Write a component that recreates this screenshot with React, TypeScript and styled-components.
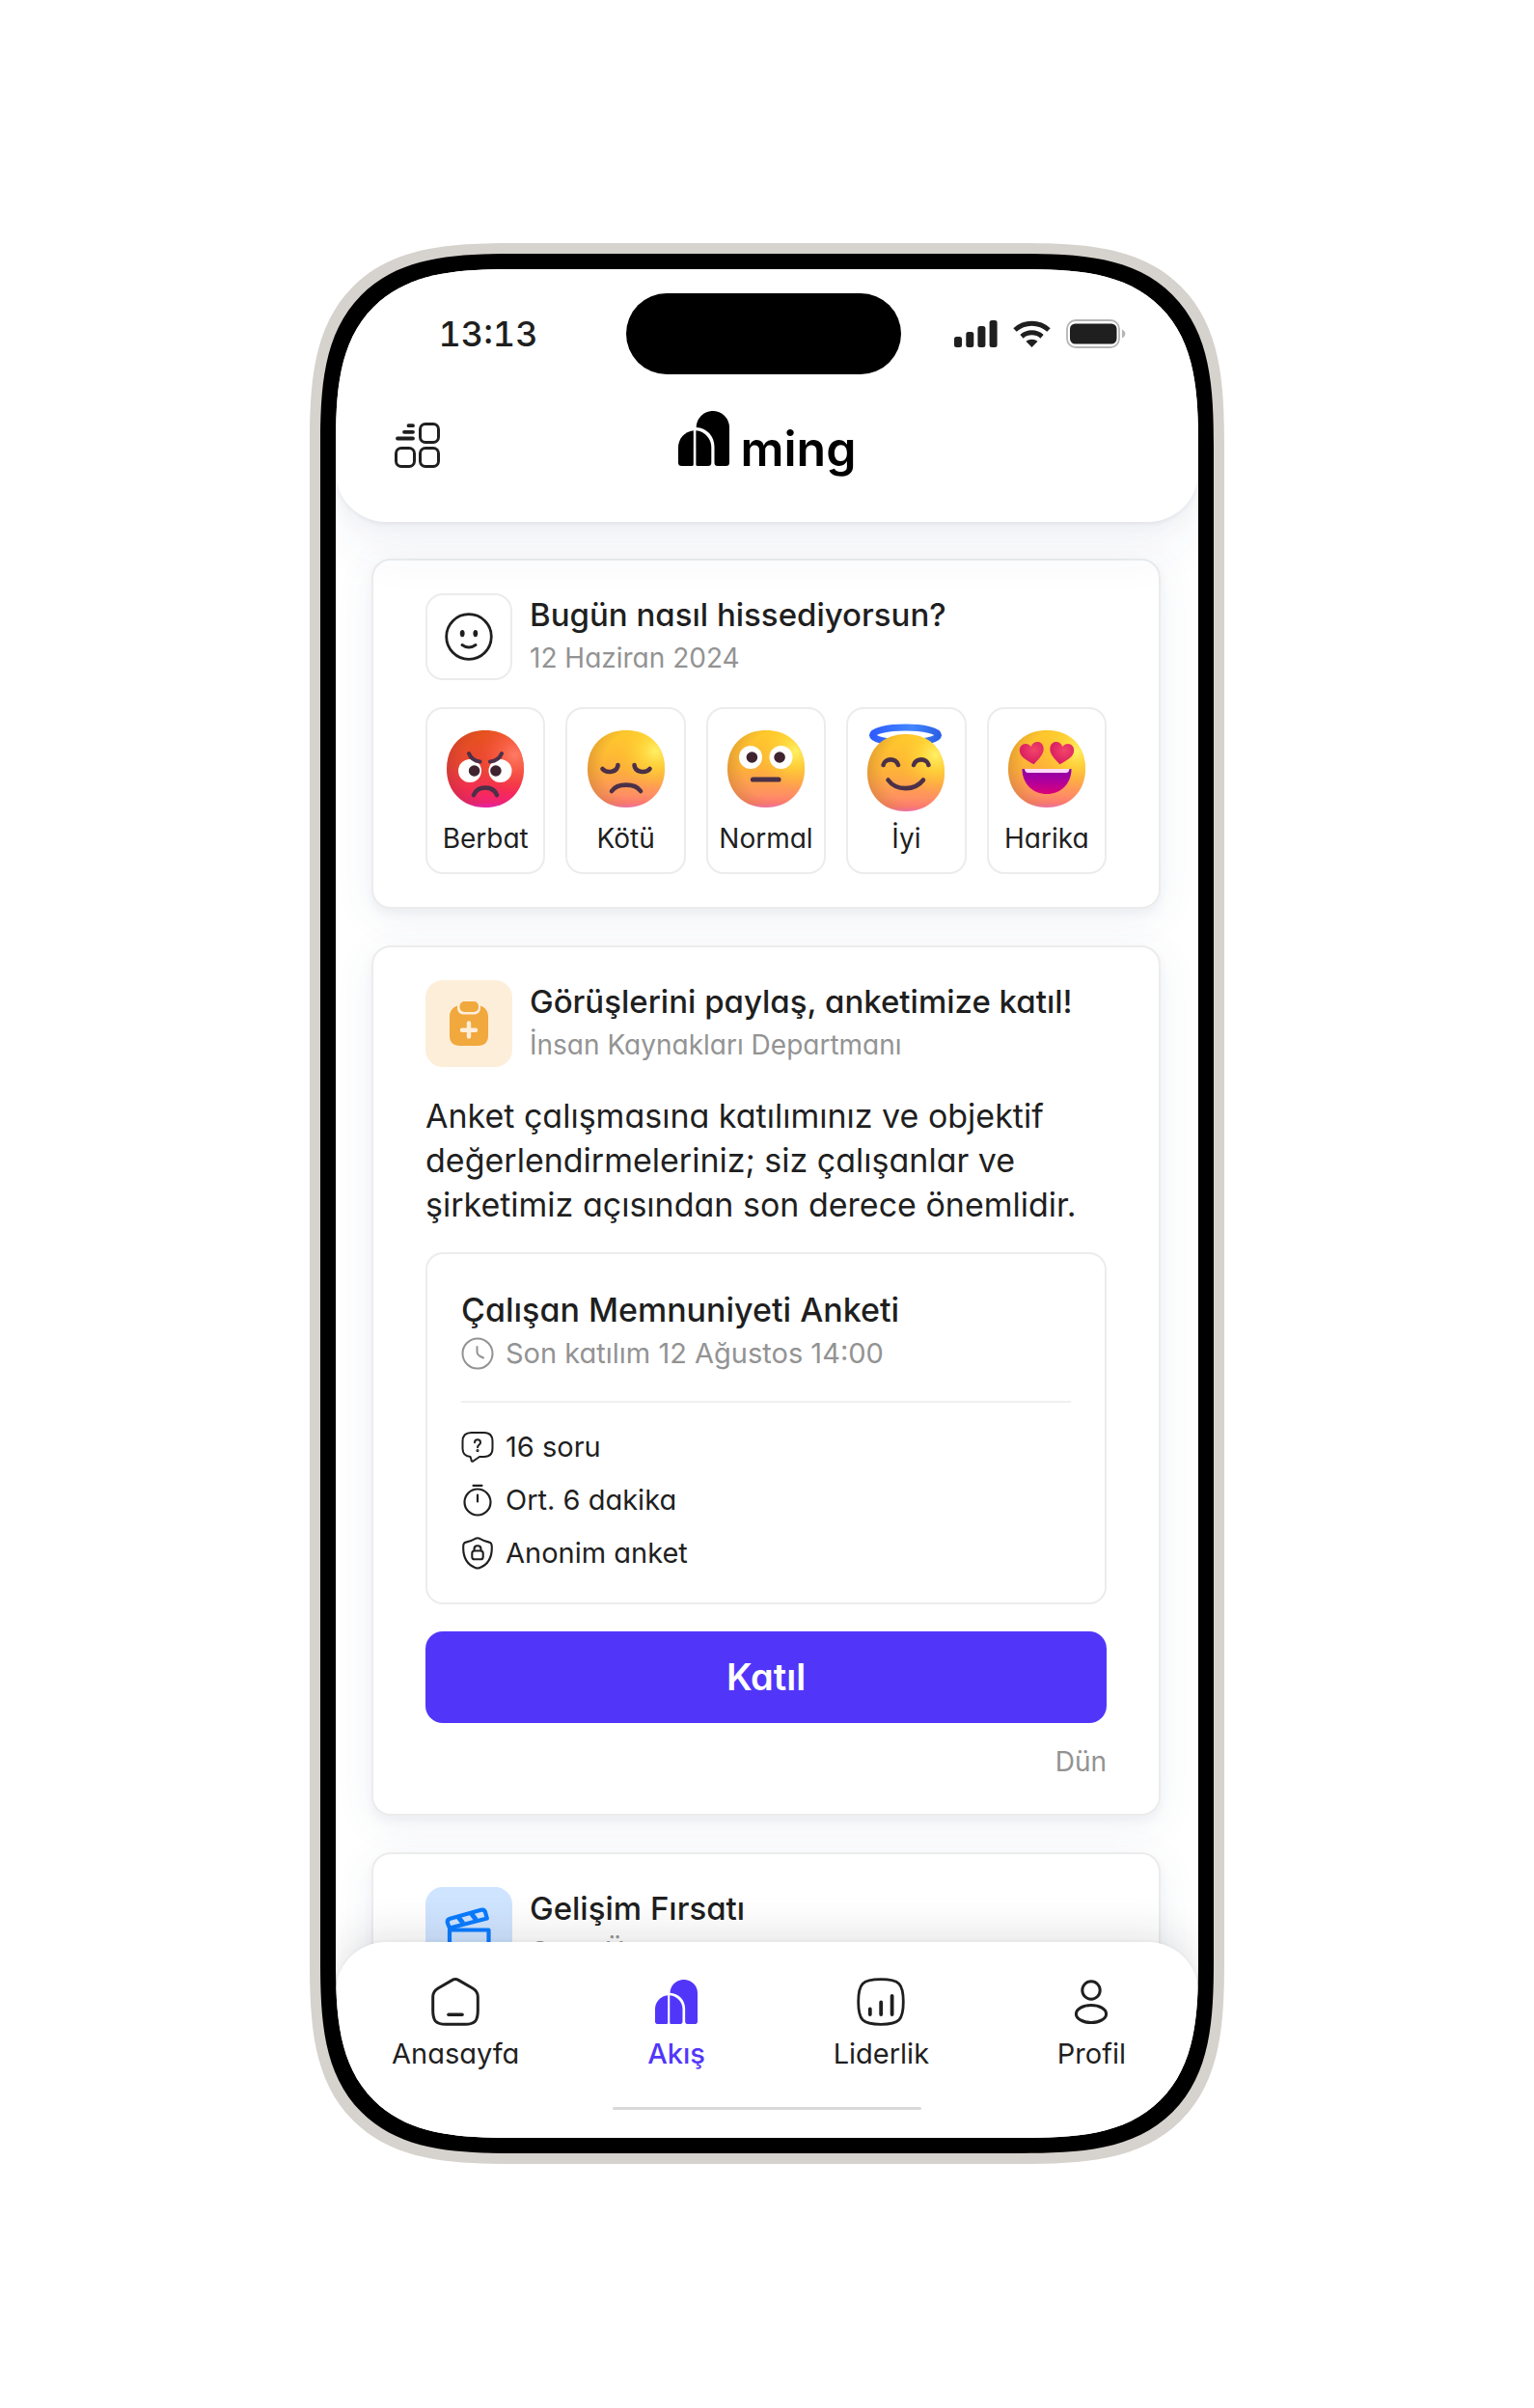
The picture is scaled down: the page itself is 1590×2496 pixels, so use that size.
import React from "react";
import styled, { createGlobalStyle, css } from "styled-components";

const ink = "#1f1f1f";
const muted = "#939393";
const line = "#ececec";
const brand = "#5136fa";

const GlobalStyle = createGlobalStyle`
  *, *::before, *::after { box-sizing: border-box; }
  body {
    margin: 0;
    background: #fff;
    color: ${ink};
    font-family: "Inter", "Noto Sans", sans-serif;
    font-feature-settings: "cv11";
  }
  h1, h2, h3, p, ul { margin: 0; padding: 0; }
  button { font: inherit; color: inherit; cursor: pointer; font-feature-settings: inherit; }
`;

/* ---------- device ---------- */

const Page = styled.div`
  display: flex;
  justify-content: center;
  padding: 252px 24px;
`;

const smoothCorner = (smooth: number, plain: number) => css`
  border-radius: ${plain}px;
  @supports (corner-shape: superellipse(1.5)) {
    border-radius: ${smooth}px;
    corner-shape: superellipse(1.54);
  }
`;

const Rim = styled.div`
  width: 100%;
  max-width: 948px;
  padding: 11px;
  background: #d6d2cd;
  ${smoothCorner(212, 154)}
`;

const Bezel = styled.div`
  padding: 16px;
  background: #000;
  ${smoothCorner(201, 143)}
`;

const Screen = styled.div`
  display: flex;
  flex-direction: column;
  overflow: hidden;
  background: #fff;
  ${smoothCorner(185, 127)}
`;

/* ---------- header ---------- */

const Header = styled.header`
  position: relative;
  z-index: 2;
  padding-top: 25px;
  background: #fff;
  border-radius: 0 0 52px 52px;
  box-shadow: 0 2px 4px rgba(40, 40, 50, 0.06), 0 8px 20px rgba(50, 80, 120, 0.05),
    0 36px 50px rgba(50, 80, 130, 0.045);
`;

const StatusBar = styled.div`
  display: grid;
  grid-template-columns: 1fr 285px 1fr;
  align-items: center;
  padding-right: 8px;
`;

const Clock = styled.time`
  justify-self: end;
  padding-right: 91px;
  font-size: 36px;
  font-weight: 500;
  font-variant-numeric: tabular-nums;
  line-height: 44px;
`;

const Island = styled.div`
  height: 84px;
  border-radius: 42px;
  background: #000;
`;

const StatusIcons = styled.div`
  display: flex;
  align-items: center;
  gap: 16px;
  padding-left: 55px;
`;

const BrandRow = styled.div`
  display: grid;
  grid-template-columns: 1fr auto 1fr;
  align-items: end;
  padding: 38px 61px 56px;
`;

const IconButton = styled.button`
  display: flex;
  justify-self: start;
  padding: 0;
  border: 0;
  background: none;
`;

const Logo = styled.h1`
  display: flex;
  align-items: baseline;
  gap: 12px;
  color: #000;
  font-size: 50px;
  font-weight: 600;
  line-height: 40px;
`;

/* ---------- feed ---------- */

const Feed = styled.main`
  display: flex;
  flex-direction: column;
  gap: 38px;
  padding: 38px 39px 0 37px;
`;

const Card = styled.article`
  padding: 34px 54px;
  border: 2px solid ${line};
  border-radius: 20px;
  background: #fff;
  box-shadow: 0 6px 10px rgba(50, 70, 110, 0.05), 0 8px 40px rgba(60, 90, 140, 0.08);
`;

const CardHead = styled.div`
  display: flex;
  gap: 18px;
`;

const Tile = styled.div<{ $bg?: string }>`
  display: grid;
  place-items: center;
  flex: none;
  width: 90px;
  height: 90px;
  border: 2px solid ${(p) => p.$bg ?? line};
  border-radius: 18px;
  background: ${(p) => p.$bg ?? "transparent"};
`;

const Title = styled.h2`
  font-size: 33px;
  font-weight: 500;
  line-height: 45px;
`;

const SurveyTitle = styled.h3`
  font-size: 34px;
  font-weight: 500;
  line-height: 45px;
`;

const Sub = styled.p`
  color: ${muted};
  font-size: 28px;
  line-height: 45px;
`;

const Moods = styled.div`
  display: grid;
  grid-template-columns: repeat(5, 1fr);
  gap: 21px;
  margin-top: 28px;
`;

const Mood = styled.button`
  display: flex;
  flex-direction: column;
  align-items: center;
  gap: 14px;
  padding: 22px 0 17px;
  border: 2px solid ${line};
  border-radius: 18px;
  background: #fff;
  font-size: 28px;
  line-height: 36px;

  svg { overflow: visible; }
`;

const Body = styled.p`
  margin-top: 28px;
  font-size: 34px;
  line-height: 46px;
`;

const Survey = styled.section`
  margin-top: 26px;
  padding: 35px 35px 24px;
  border: 2px solid ${line};
  border-radius: 18px;
`;

const Deadline = styled.p`
  display: flex;
  align-items: center;
  gap: 12px;
  color: ${muted};
  font-size: 29px;
  line-height: 45px;
`;

const Facts = styled.ul`
  margin-top: 27px;
  padding-top: 18px;
  border-top: 2px solid #f0f0f0;
  list-style: none;
`;

const Fact = styled.li`
  display: flex;
  align-items: center;
  gap: 12px;
  font-size: 29px;
  line-height: 55px;
`;

const Primary = styled.button`
  display: block;
  width: 100%;
  margin-top: 28px;
  padding: 0;
  border: 0;
  border-radius: 18px;
  background: ${brand};
  && { color: #fff; font-size: 38px; font-weight: 600; line-height: 95px; }
`;

const When = styled.p`
  margin-top: 20px;
  color: ${muted};
  font-size: 28px;
  line-height: 40px;
  text-align: right;
`;

/* ---------- tab bar ---------- */

const TabBar = styled.nav`
  position: relative;
  z-index: 2;
  margin-top: -69px;
  padding: 37px 0 29px;
  background: #fff;
  border-radius: 52px 52px 0 0;
  box-shadow: 0 -2px 3px rgba(0, 0, 0, 0.03), 0 -8px 44px rgba(30, 34, 44, 0.12);
`;

const Tabs = styled.div`
  display: flex;
  justify-content: space-between;
  padding: 0 75px 0 58px;
`;

const Tab = styled.a<{ $active?: boolean }>`
  display: flex;
  flex-direction: column;
  align-items: center;
  gap: 10px;
  color: ${(p) => (p.$active ? brand : ink)};
  font-size: 29px;
  font-weight: ${(p) => (p.$active ? 500 : 400)};
  line-height: 38px;
  text-decoration: none;
`;

const HomeIndicator = styled.div`
  width: 320px;
  height: 3px;
  margin: 36px auto 0;
  border-radius: 3px;
  background: #d9d9d9;
`;

/* ---------- icons ---------- */

const Signal = () => (
  <svg width="45" height="28" viewBox="0 0 45 28" fill={ink} aria-hidden>
    <rect x="0" y="17" width="8" height="11" rx="2.5" />
    <rect x="12.3" y="12" width="8" height="16" rx="2.5" />
    <rect x="24.4" y="6" width="8" height="22" rx="2.5" />
    <rect x="36.6" y="0" width="8" height="28" rx="2.5" />
  </svg>
);

const Wifi = () => (
  <svg width="39" height="28" viewBox="0 0 39 28" aria-hidden>
    <g fill="none" stroke={ink} strokeWidth="5">
      <path d="M2 10 A26 26 0 0 1 37 10" />
      <path d="M9 16.8 A16 16 0 0 1 30 16.8" />
    </g>
    <path d="M13.4 21.8 A10 10 0 0 1 25.6 21.8 L19.5 28 Z" fill={ink} />
  </svg>
);

const Battery = () => (
  <svg width="62" height="30" viewBox="0 0 62 30" aria-hidden>
    <rect x="1" y="1" width="54" height="28" rx="9" fill="none" stroke="#b5b5b5" strokeWidth="1.8" />
    <rect x="4" y="4.5" width="48.5" height="21" rx="5.5" fill={ink} />
    <path d="M58 10.5 c4.5 2 4.5 7 0 9 z" fill="#b5b5b5" />
  </svg>
);

const MenuIcon = () => (
  <svg width="47" height="47" viewBox="0 0 47 47" fill="none" stroke={ink} strokeWidth="3" aria-hidden>
    <rect x="26.5" y="1.5" width="19" height="19" rx="5.5" />
    <rect x="1.5" y="26.5" width="19" height="19" rx="5.5" />
    <rect x="26.5" y="26.5" width="19" height="19" rx="5.5" />
    <path d="M14.5 3.2 H19 M10 9.8 H19 M3 16.5 H19" strokeWidth="3.8" strokeLinecap="round" />
  </svg>
);

const Mark = ({ width, height }: { width: number; height: number }) => (
  <svg width={width} height={height} viewBox="0 0 53 57" preserveAspectRatio="none" fill="currentColor" aria-hidden>
    <path d="M18.7 17 A17.1 17 0 0 1 53 17 V53.5 Q53 57 49.5 57 H41 Q37.5 57 37.5 53.5 V37 C37.5 26 29.5 17.6 18.7 17 Z" />
    <path d="M15.8 20.2 V55.5 Q15.8 57 14 57 H3.5 Q0 57 0 53.5 V37.5 C0 29 6.5 21.2 15.8 20.2 Z" />
    <path d="M18.4 20.2 C27.5 21 34.3 29 34.3 37.5 V53.5 Q34.3 57 30.8 57 H20.2 Q18.4 57 18.4 55.5 Z" />
  </svg>
);

const Smile = () => (
  <svg width="50" height="50" viewBox="0 0 50 50" fill="none" stroke={ink} aria-hidden>
    <circle cx="25" cy="25" r="23.3" strokeWidth="2.8" />
    <ellipse cx="18.2" cy="21.6" rx="2.4" ry="3.6" fill={ink} stroke="none" />
    <ellipse cx="31.8" cy="21.6" rx="2.4" ry="3.6" fill={ink} stroke="none" />
    <path d="M18 33.5 Q25 38.5 32 33.5" strokeWidth="3" strokeLinecap="round" />
  </svg>
);

const Clipboard = () => (
  <svg width="40" height="46" viewBox="0 0 40 46" aria-hidden>
    <path d="M8 4.5 C3 6 0 10.5 0 15.5 V35 Q0 46 11 46 H29 Q40 46 40 35 V15.5 C40 10.5 37 6 32 4.5 C32.5 11 29.5 13.5 25 13.5 H15 C10.5 13.5 7.5 11 8 4.5 Z" fill="#f1a83c" />
    <rect x="10.5" y="0" width="19.5" height="11" rx="5" fill="#f1a83c" />
    <path d="M20 22.5 V36.5 M13 29.7 H27" stroke="#fdeeda" strokeWidth="4.4" strokeLinecap="round" />
  </svg>
);

const ClockIcon = () => (
  <svg width="34" height="34" viewBox="0 0 34 34" fill="none" stroke={muted} strokeWidth="2" strokeLinecap="round" aria-hidden>
    <circle cx="17" cy="17" r="15.5" />
    <path d="M16.5 10 V15.5 Q16.5 18 19 19.5 L23 21.5" />
  </svg>
);

const QuestionIcon = () => (
  <svg width="34" height="34" viewBox="0 0 34 34" fill="none" stroke={ink} strokeWidth="2" strokeLinecap="round" strokeLinejoin="round" aria-hidden>
    <path d="M9.5 27 C4.5 26.5 1.5 23.5 1.5 18.5 V11 Q1.5 2 10.5 2 H23.5 Q32.5 2 32.5 11 V18 Q32.5 27 23.5 27 H19 L12.5 31.5 Q10.5 32.5 10.5 30 Z" />
    <path d="M14 12.2 C14 8.2 20 8.2 20 12.2 C20 14.6 17 14.8 17 17.2" />
    <circle cx="17" cy="20.6" r="0.6" />
  </svg>
);

const TimerIcon = () => (
  <svg width="34" height="34" viewBox="0 0 34 34" fill="none" stroke={ink} strokeWidth="2.2" strokeLinecap="round" aria-hidden>
    <circle cx="17" cy="19" r="13.5" />
    <path d="M12.5 1.8 H21.5 M17 11.5 V18.5" />
  </svg>
);

const ShieldIcon = () => (
  <svg width="34" height="34" viewBox="0 0 34 34" fill="none" stroke={ink} strokeWidth="2.1" strokeLinejoin="round" aria-hidden>
    <path d="M14.8 1.8 Q17 0.8 19.2 1.8 C22.5 3.6 25 4.8 29 5.6 Q31.5 6.2 31.7 8.8 C32.5 20.5 28 28.5 19.5 32 Q17 33 14.5 32 C6 28.5 1.5 20.5 2.3 8.8 Q2.5 6.2 5 5.6 C9 4.8 11.5 3.6 14.8 1.8 Z" />
    <rect x="11.3" y="14.5" width="11.4" height="8.8" rx="2.6" />
    <path d="M13.5 14.5 V12.6 C13.5 8.2 20.5 8.2 20.5 12.6 V14.5" />
  </svg>
);

const Clapper = () => (
  <svg width="50" height="50" viewBox="0 0 50 50" fill="none" stroke="#0a7bff" strokeWidth="4.2" strokeLinejoin="round" aria-hidden>
    <path d="M5 24.5 H45.5 V44 Q45.5 48 41.5 48 H9 Q5 48 5 44 Z" />
    <path d="M5 22.5 L3 17.5 Q2 13.8 5.6 12.8 L37.5 3.8 Q41 2.8 42 6 L43.8 12.5 Z" />
    <path d="M13.5 10.5 L19 17.5 M27 6.8 L32.5 14" strokeWidth="5" />
  </svg>
);

const HomeIcon = () => (
  <svg width="50" height="50" viewBox="0 0 50 50" fill="none" stroke={ink} strokeWidth="3" strokeLinecap="round" aria-hidden>
    <path d="M21.5 2.6 Q25 0.6 28.5 2.6 L43 11 Q48.3 14.2 48.3 20 V34 C48.3 45 45 48.3 35 48.3 H15 C5 48.3 1.7 45 1.7 34 V20 Q1.7 14.2 7 11 Z" />
    <path d="M18 38.3 H32" strokeWidth="3.6" />
  </svg>
);

const ChartIcon = () => (
  <svg width="50" height="50" viewBox="0 0 50 50" fill="none" stroke={ink} strokeLinecap="round" aria-hidden>
    <path d="M25 1.7 C44 1.7 48.3 6 48.3 25 C48.3 44 44 48.3 25 48.3 C6 48.3 1.7 44 1.7 25 C1.7 6 6 1.7 25 1.7 Z" strokeWidth="2.8" />
    <path d="M13.8 32.5 V38 M25.2 25.5 V38 M36.6 18.8 V38" strokeWidth="3.8" />
  </svg>
);

const ProfileIcon = () => (
  <svg width="50" height="50" viewBox="0 0 50 50" fill="none" stroke={ink} strokeWidth="3" aria-hidden>
    <circle cx="25" cy="13" r="9.2" />
    <ellipse cx="25" cy="37.5" rx="15.6" ry="9" />
  </svg>
);

const MarkIcon = () => (
  <svg width="50" height="50" viewBox="0 0 50 50" aria-hidden>
    <svg x="3" y="2" width="44" height="46">
      <Mark width={44} height={46} />
    </svg>
  </svg>
);

/* ---------- emoji ---------- */

const featureInk = "#4b3048";
const facePath =
  "M40 0 C64 0 80 16 80 40 C80 63.5 63.5 80 40 80 C16.5 80 0 63.5 0 40 C0 16 16 0 40 0 Z";

const FaceDefs = () => (
  <svg width="0" height="0" style={{ position: "absolute" }} aria-hidden>
    <defs>
      <linearGradient id="yellowBase" x1="0" y1="0" x2="0" y2="1">
        <stop offset="0" stopColor="#ffcb2b" />
        <stop offset="0.5" stopColor="#fdb03a" />
        <stop offset="0.82" stopColor="#ff9260" />
        <stop offset="0.94" stopColor="#ff7a72" />
        <stop offset="1" stopColor="#f56cc0" />
      </linearGradient>
      <radialGradient id="yellowShine" cx="0.88" cy="0.27" r="0.5">
        <stop offset="0" stopColor="#fff066" />
        <stop offset="0.4" stopColor="#ffdc3c" stopOpacity="0.7" />
        <stop offset="1" stopColor="#ffc22c" stopOpacity="0" />
      </radialGradient>
      <radialGradient id="yellowShade" cx="0.64" cy="0.46" r="0.68">
        <stop offset="0.65" stopColor="#c98030" stopOpacity="0" />
        <stop offset="1" stopColor="#c27a30" stopOpacity="0.5" />
      </radialGradient>
      <linearGradient id="redBase" x1="0" y1="0" x2="0" y2="1">
        <stop offset="0" stopColor="#e5541c" />
        <stop offset="0.5" stopColor="#ea4436" />
        <stop offset="0.8" stopColor="#f62a58" />
        <stop offset="0.93" stopColor="#f22275" />
        <stop offset="1" stopColor="#f01fc4" />
      </linearGradient>
      <radialGradient id="redShine" cx="0.88" cy="0.32" r="0.5">
        <stop offset="0" stopColor="#ff7c66" />
        <stop offset="1" stopColor="#ff4a34" stopOpacity="0" />
      </radialGradient>
      <radialGradient id="redShade" cx="0.64" cy="0.46" r="0.68">
        <stop offset="0.65" stopColor="#b03030" stopOpacity="0" />
        <stop offset="1" stopColor="#b03030" stopOpacity="0.45" />
      </radialGradient>
      <linearGradient id="halo" x1="0" y1="0" x2="1" y2="0">
        <stop offset="0" stopColor="#2f5cff" />
        <stop offset="0.6" stopColor="#4387ff" />
        <stop offset="1" stopColor="#2b61e6" />
      </linearGradient>
      <linearGradient id="mouth" x1="0" y1="0" x2="0" y2="1">
        <stop offset="0" stopColor="#8c00a8" />
        <stop offset="0.5" stopColor="#b0009c" />
        <stop offset="1" stopColor="#dc0078" />
      </linearGradient>
      <radialGradient id="heart" cx="0.6" cy="0.35" r="0.7">
        <stop offset="0" stopColor="#f24568" />
        <stop offset="1" stopColor="#d61662" />
      </radialGradient>
    </defs>
  </svg>
);

const Face = ({ tone = "yellow", children }: { tone?: "yellow" | "red"; children: React.ReactNode }) => (
  <g>
    <path d={facePath} fill={`url(#${tone}Base)`} />
    <path d={facePath} fill={`url(#${tone}Shine)`} />
    <path d={facePath} fill={`url(#${tone}Shade)`} />
    {children}
  </g>
);

const Features = ({ d, width = 4.6 }: { d: string; width?: number }) => (
  <path d={d} fill="none" stroke={featureInk} strokeWidth={width} strokeLinecap="round" />
);

const Eye = ({ x, y, pupil }: { x: number; y: number; pupil: number }) => (
  <g>
    <circle cx={x} cy={y} r="12" fill="#fff" />
    <circle cx={x + pupil} cy={y} r="5.8" fill="#3f2430" />
  </g>
);

const Emoji = ({ children }: { children: React.ReactNode }) => (
  <svg width="80" height="80" viewBox="0 0 80 80" aria-hidden>
    {children}
  </svg>
);

const Angry = () => (
  <Emoji>
    <Face tone="red">
      <Eye x={24} y={42} pupil={4.6} />
      <Eye x={55.5} y={42} pupil={-4.6} />
      <Features d="M23 24 Q26 31.5 34.5 32.5 M57 24 Q54 31.5 45 32.5" width={4} />
      <Features d="M28 67 C32 57 48 57 52 67" />
    </Face>
  </Emoji>
);

const Sad = () => (
  <Emoji>
    <Face>
      <Features d="M15.5 40 C20 45 31 43.5 31.5 36 M64.5 40 C60 45 49 43.5 48.5 36" />
      <Features d="M25 63 C31 54.5 49 54.5 55 63" />
    </Face>
  </Emoji>
);

const Neutral = () => (
  <Emoji>
    <Face>
      <Eye x={24} y={28} pupil={1.4} />
      <Eye x={55.5} y={28} pupil={-1.4} />
      <Features d="M26.5 51 H53" width={5.2} />
    </Face>
  </Emoji>
);

const Blessed = () => (
  <Emoji>
    <ellipse cx="39.5" cy="5" rx="34" ry="8" fill="none" stroke="url(#halo)" strokeWidth="7" />
    <g transform="translate(0 4)">
      <Face>
        <Features d="M16.5 32 C18 24.5 30 24.5 32 32 M48 32 C50 24.5 62 24.5 63.5 32" />
        <Features d="M21.5 47.5 C30 59 49 59 58 47.5" />
      </Face>
    </g>
  </Emoji>
);

const heartPath = "M0 14 C-6 9 -12.5 5 -12.5 -1.5 C-12.5 -9.5 -3 -11 0 -4.5 C3 -11 12.5 -9.5 12.5 -1.5 C12.5 5 6 9 0 14 Z";

const Love = () => (
  <Emoji>
    <Face>
      <path d={heartPath} transform="translate(24.5 21.5) rotate(-9)" fill="url(#heart)" />
      <path d={heartPath} transform="translate(55.5 21.5) rotate(9)" fill="url(#heart)" />
      <path d="M14.5 40 H65.5 C65.5 56 54 66 40 66 C26 66 14.5 56 14.5 40 Z" fill="url(#mouth)" />
      <path d="M17 40 H63.5 Q63 44 60 44 H20.5 Q17.5 44 17 40 Z" fill="#fbdcf8" />
    </Face>
  </Emoji>
);

const moods = [
  { label: "Berbat", Icon: Angry },
  { label: "Kötü", Icon: Sad },
  { label: "Normal", Icon: Neutral },
  { label: "İyi", Icon: Blessed },
  { label: "Harika", Icon: Love },
];

const facts = [
  { label: "16 soru", Icon: QuestionIcon },
  { label: "Ort. 6 dakika", Icon: TimerIcon },
  { label: "Anonim anket", Icon: ShieldIcon },
];

const tabs = [
  { label: "Anasayfa", href: "#anasayfa", Icon: HomeIcon },
  { label: "Akış", href: "#akis", Icon: MarkIcon, active: true },
  { label: "Liderlik", href: "#liderlik", Icon: ChartIcon },
  { label: "Profil", href: "#profil", Icon: ProfileIcon },
];

export default function App() {
  return (
    <Page lang="tr">
      <GlobalStyle />
      <FaceDefs />
      <Rim>
        <Bezel>
          <Screen>
            <Header>
              <StatusBar>
                <Clock>13:13</Clock>
                <Island />
                <StatusIcons>
                  <Signal />
                  <Wifi />
                  <Battery />
                </StatusIcons>
              </StatusBar>
              <BrandRow>
                <IconButton type="button" aria-label="Menü">
                  <MenuIcon />
                </IconButton>
                <Logo>
                  <Mark width={53} height={57} />
                  ming
                </Logo>
              </BrandRow>
            </Header>

            <Feed>
              <Card>
                <CardHead>
                  <Tile>
                    <Smile />
                  </Tile>
                  <div>
                    <Title>Bugün nasıl hissediyorsun?</Title>
                    <Sub>12 Haziran 2024</Sub>
                  </div>
                </CardHead>
                <Moods>
                  {moods.map(({ label, Icon }) => (
                    <Mood key={label} type="button">
                      <Icon />
                      {label}
                    </Mood>
                  ))}
                </Moods>
              </Card>

              <Card>
                <CardHead>
                  <Tile $bg="#fdeeda">
                    <Clipboard />
                  </Tile>
                  <div>
                    <Title>Görüşlerini paylaş, anketimize katıl!</Title>
                    <Sub>İnsan Kaynakları Departmanı</Sub>
                  </div>
                </CardHead>
                <Body>
                  Anket çalışmasına katılımınız ve objektif değerlendirmeleriniz; siz çalışanlar ve
                  şirketimiz açısından son derece önemlidir.
                </Body>
                <Survey>
                  <SurveyTitle>Çalışan Memnuniyeti Anketi</SurveyTitle>
                  <Deadline>
                    <ClockIcon />
                    Son katılım 12 Ağustos 14:00
                  </Deadline>
                  <Facts>
                    {facts.map(({ label, Icon }) => (
                      <Fact key={label}>
                        <Icon />
                        {label}
                      </Fact>
                    ))}
                  </Facts>
                </Survey>
                <Primary type="button">Katıl</Primary>
                <When>Dün</When>
              </Card>

              <Card>
                <CardHead>
                  <Tile $bg="#cfe4ff">
                    <Clapper />
                  </Tile>
                  <div>
                    <Title>Gelişim Fırsatı</Title>
                    <Sub>Genç Üye</Sub>
                  </div>
                </CardHead>
              </Card>
            </Feed>

            <TabBar>
              <Tabs>
                {tabs.map(({ label, href, Icon, active }) => (
                  <Tab key={label} href={href} $active={active} aria-current={active ? "page" : undefined}>
                    <Icon />
                    {label}
                  </Tab>
                ))}
              </Tabs>
              <HomeIndicator />
            </TabBar>
          </Screen>
        </Bezel>
      </Rim>
    </Page>
  );
}
